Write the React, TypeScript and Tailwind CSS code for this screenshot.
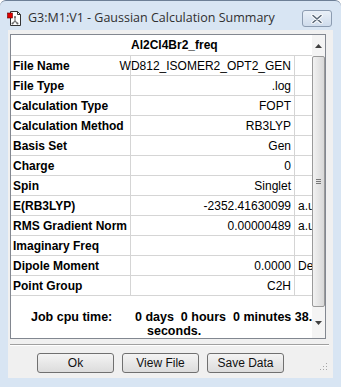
import React from 'react';

const rows: { label: string; value: string; unit?: string }[] = [
  { label: 'File Name', value: 'WD812_ISOMER2_OPT2_GEN' },
  { label: 'File Type', value: '.log' },
  { label: 'Calculation Type', value: 'FOPT' },
  { label: 'Calculation Method', value: 'RB3LYP' },
  { label: 'Basis Set', value: 'Gen' },
  { label: 'Charge', value: '0' },
  { label: 'Spin', value: 'Singlet' },
  { label: 'E(RB3LYP)', value: '-2352.41630099', unit: 'a.u.' },
  { label: 'RMS Gradient Norm', value: '0.00000489', unit: 'a.u.' },
  { label: 'Imaginary Freq', value: '' },
  { label: 'Dipole Moment', value: '0.0000', unit: 'Debye' },
  { label: 'Point Group', value: 'C2H' },
];

function AppIcon() {
  return (
    <svg width="16" height="17" viewBox="0 0 16 17">
      <path d="M3.5 1.5h7l3 3v11h-10z" fill="#fff" stroke="#333" />
      <path d="M10.5 1.5v3h3" fill="none" stroke="#333" />
      <rect x="0.5" y="3" width="5" height="5" fill="#e00000" stroke="#600" strokeWidth="0.6" />
      <path d="M8 7v4M8 11l-2.5 2.5M8 11l2.5 2.5" stroke="#777" strokeWidth="1.2" />
      <circle cx="8" cy="7" r="1" fill="#666" />
      <circle cx="5.5" cy="13.5" r="1" fill="#666" />
      <circle cx="10.5" cy="13.5" r="1" fill="#666" />
    </svg>
  );
}

function Button({ children }: { children: React.ReactNode }) {
  return (
    <div className="flex h-[20px] w-[77px] items-center justify-center rounded-[3px] border border-[#707070] bg-gradient-to-b from-[#f4f4f4] to-[#dcdcdc] text-[12px] text-[#111]">
      {children}
    </div>
  );
}

export default function App() {
  return (
    <div
      className="flex h-[387px] w-[341px] flex-col overflow-hidden rounded-t-[6px] border-t border-[#6d7f96] bg-[#d8e5f3]"
      style={{ fontFamily: '"Liberation Sans", Arial, sans-serif' }}
    >
      {/* title bar */}
      <div className="flex h-[29px] items-center pl-[7px] pr-[9px] pt-[6px]">
        <AppIcon />
        <span
          className="ml-[5px] flex-1 text-[12.5px] text-[#303030]"
          style={{ fontFamily: '"Open Sans", sans-serif' }}
        >
          G3:M1:V1 - Gaussian Calculation Summary
        </span>
        <div className="flex h-[17px] w-[30px] items-center justify-center rounded-[3px] border border-[#8c9cb1] bg-gradient-to-b from-[#e9f0f8] to-[#cfdcec]">
          <svg width="12" height="10" viewBox="0 0 12 10">
            <path d="M2 1.5l8 7M10 1.5l-8 7" stroke="#fff" strokeWidth="3.4" strokeLinecap="round" />
            <path d="M2 1.5l8 7M10 1.5l-8 7" stroke="#5a6878" strokeWidth="1.6" strokeLinecap="round" />
          </svg>
        </div>
      </div>

      {/* client area */}
      <div className="mx-[8px] mb-[9px] flex flex-1 flex-col bg-[#f0f0f0] px-[2px] pt-[4px]">
        <div className="flex h-[305px] w-[316px] border border-[#828790] bg-white">
          <div className="flex w-[301px] flex-col text-[12px] text-black">
            <div className="flex h-[21px] items-center border-b border-[#d5d5d5] pl-[120px] font-bold">
              Al2Cl4Br2_freq
            </div>
            {rows.map((r) => (
              <div key={r.label} className="flex h-[20px] border-b border-[#d5d5d5]">
                <div className="flex w-[120px] items-center border-r border-[#d5d5d5] pl-[2px] font-bold">
                  {r.label}
                </div>
                <div className="flex w-[164px] items-center justify-end border-r border-[#d5d5d5] pr-[3px]">
                  {r.value}
                </div>
                <div className="flex w-[17px] items-center overflow-hidden whitespace-nowrap pl-[3px]">
                  {r.unit ?? ''}
                </div>
              </div>
            ))}
            <div className="flex flex-1 flex-col overflow-hidden pt-[14px] text-[12.5px] font-bold leading-[14px]">
              <div className="flex whitespace-nowrap">
                <span className="w-[124px] shrink-0 pl-[20px]">Job cpu time:</span>
                <span className="whitespace-pre">0 days  0 hours  0 minutes 38.0</span>
              </div>
              <div className="pl-[136px]">seconds.</div>
            </div>
          </div>

          {/* scrollbar */}
          <div className="flex w-[13px] flex-col bg-[#f4f4f4]">
            <div className="flex h-[21px] items-center justify-center">
              <svg width="7" height="4" viewBox="0 0 7 4">
                <path d="M0 4L3.5 0 7 4z" fill="#404040" />
              </svg>
            </div>
            <div className="flex h-[251px] flex-col items-center justify-center rounded-[2px] border border-[#9a9a9a] bg-gradient-to-r from-[#f2f2f2] to-[#d8d8d8]">
              <div className="flex flex-col gap-[1px]">
                <div className="h-px w-[5px] bg-[#777]" />
                <div className="h-px w-[5px] bg-[#777]" />
                <div className="h-px w-[5px] bg-[#777]" />
              </div>
            </div>
            <div className="flex flex-1 items-center justify-center">
              <svg width="7" height="4" viewBox="0 0 7 4">
                <path d="M0 0L3.5 4 7 0z" fill="#404040" />
              </svg>
            </div>
          </div>
        </div>

        <div className="mt-[5px] h-[2px] w-[319px] border-t border-[#a0a0a0] border-b-white" style={{ borderBottomWidth: 1 }} />

        <div className="relative flex flex-1 items-start gap-[8px] pl-[27px] pt-[7px]">
          <Button>Ok</Button>
          <Button>View File</Button>
          <Button>Save Data</Button>
          <svg className="absolute bottom-[7px] right-[3px]" width="8" height="8" viewBox="0 0 8 8">
            <rect x="6" y="0" width="1" height="1" fill="#a6a6a6" />
            <rect x="3" y="3" width="1" height="1" fill="#a6a6a6" />
            <rect x="6" y="3" width="1" height="1" fill="#a6a6a6" />
            <rect x="0" y="6" width="1" height="1" fill="#a6a6a6" />
            <rect x="3" y="6" width="1" height="1" fill="#a6a6a6" />
            <rect x="6" y="6" width="1" height="1" fill="#a6a6a6" />
          </svg>
        </div>
      </div>
    </div>
  );
}
